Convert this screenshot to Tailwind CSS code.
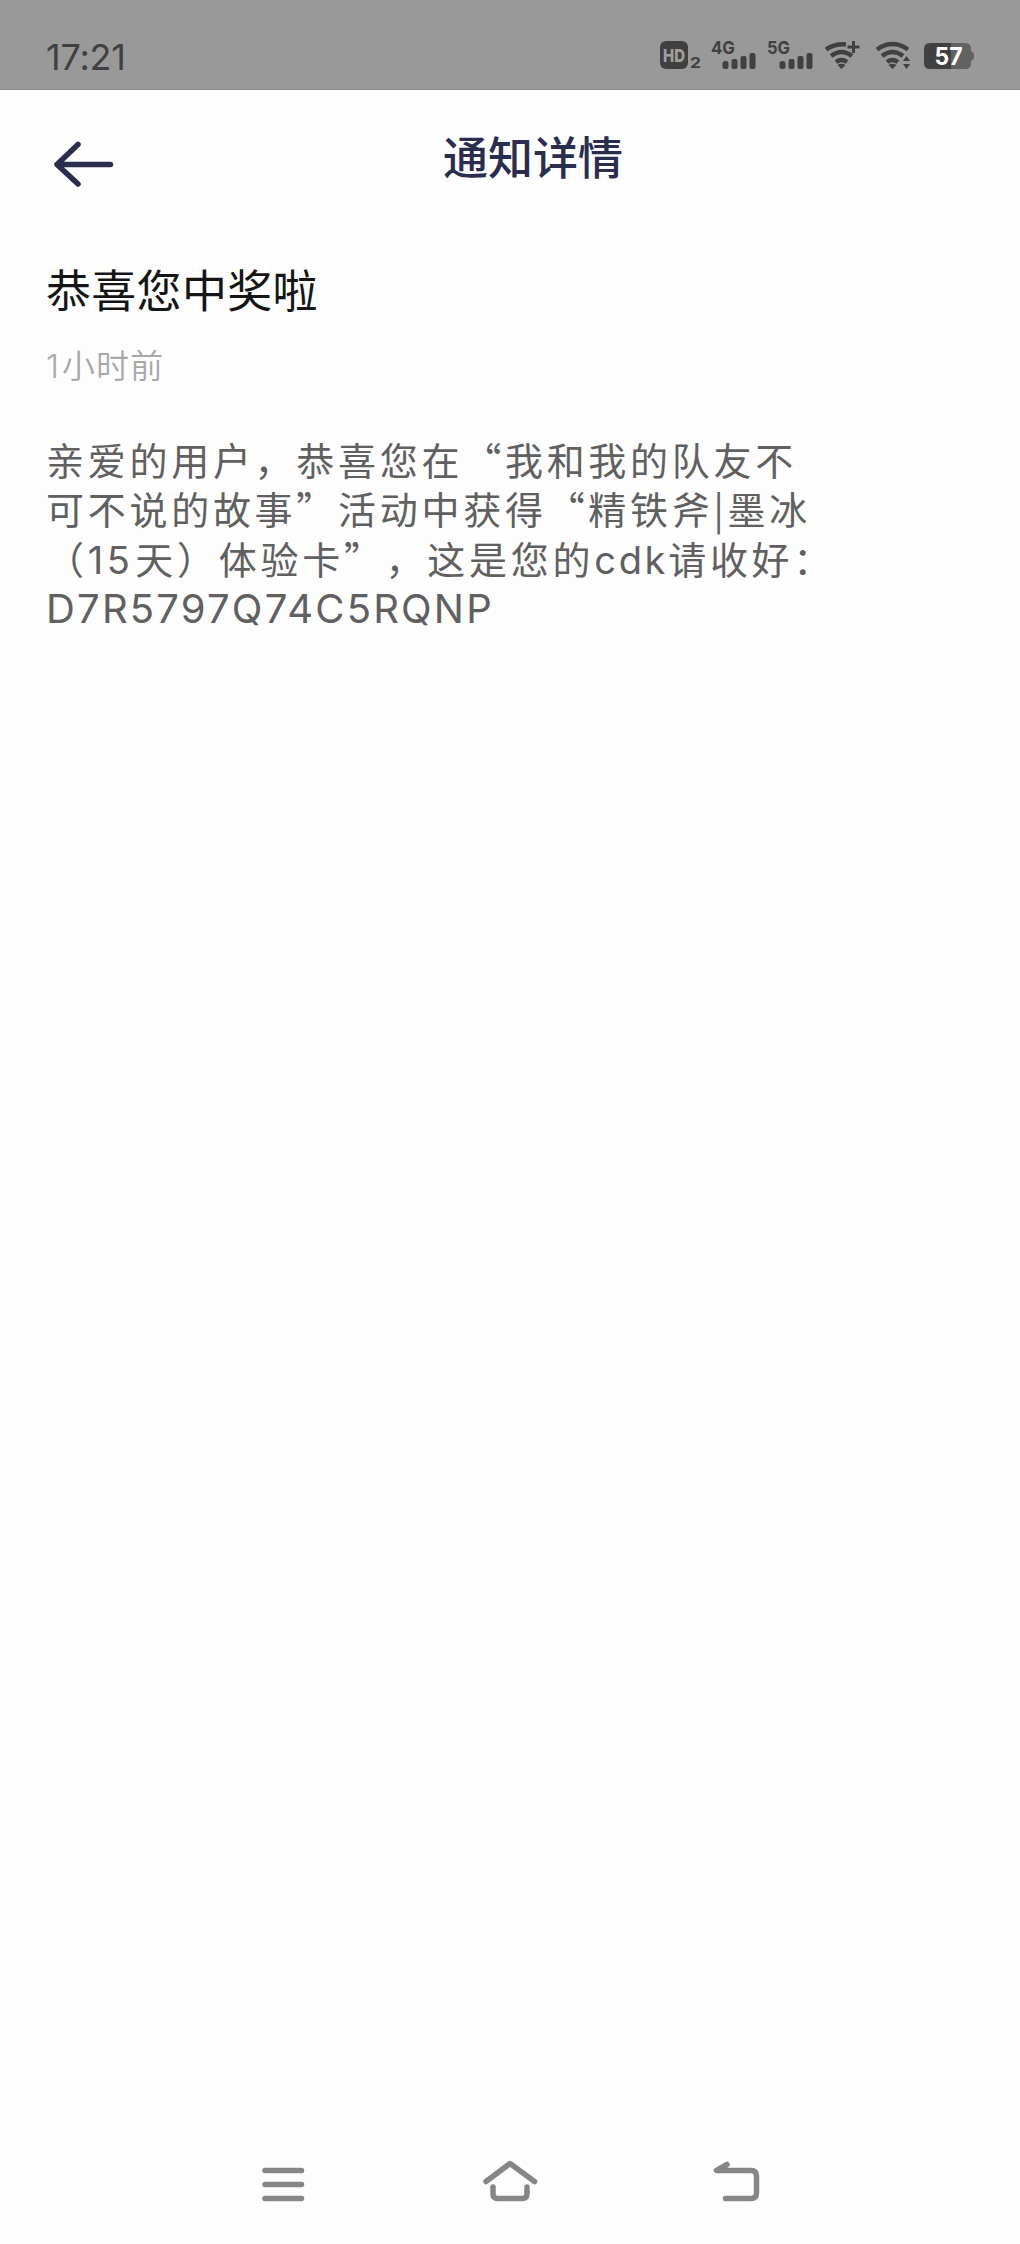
<!DOCTYPE html>
<html lang="zh-CN">
<head>
<meta charset="utf-8">
<title>通知详情</title>
<script src="https://cdn.jsdelivr.net/npm/@tailwindcss/browser@4"></script>
</head>
<body class="bg-[#fdfdfd] font-['Noto_Sans_CJK_SC',sans-serif]">
<div class="flex h-[2244px] w-[1020px] flex-col overflow-hidden">
  <header class="flex h-[90px] shrink-0 items-start justify-between border-b border-[#858585] bg-[#999] pl-[46px] pr-[44px] text-[#404040]">
    <time class="mt-[34px] font-['Inter',sans-serif] text-[36px] leading-[46px] tracking-[-0.2px]">17:21</time>
    <svg class="mt-5 h-[70px] w-[320px]" viewBox="656 20 320 70" fill="#404040">
      <rect x="660" y="41" width="28" height="28" rx="6"/>
      <text x="663" y="61.500" font-family="Inter" font-weight="800" font-size="18" textLength="22" lengthAdjust="spacingAndGlyphs" fill="#a0a0a0">HD</text>
      <text x="690" y="68" font-family="Inter" font-weight="700" font-size="15" textLength="11" lengthAdjust="spacingAndGlyphs">2</text>
      <text x="711" y="54" font-family="Inter" font-weight="700" font-size="18" textLength="24" lengthAdjust="spacingAndGlyphs">4G</text>
      <g id="bars"><rect x="722.5" y="61" width="6" height="8" rx="2.5"/><rect x="731.5" y="59" width="6" height="10" rx="2"/><rect x="740.5" y="56" width="6" height="13" rx="2"/><rect x="749.500" y="53" width="6" height="16" rx="2"/></g>
      <text x="767" y="54" font-family="Inter" font-weight="700" font-size="18" textLength="23" lengthAdjust="spacingAndGlyphs">5G</text>
      <use href="#bars" x="57"/>
      <g fill="none" stroke="#404040" stroke-width="4.500">
        <path d="M826 49.500Q835 43.500 846 44.500M831 56Q841.500 48 852 56M836 62Q841.500 58 847 62"/>
        <path d="M853.500 41V53M847.500 47H859.500" stroke-width="3"/>
        <path d="M877 49.500Q892.500 38.500 908 49.500M882 56Q892.500 48 903 56M887 62Q892.500 58 898 62"/>
      </g>
      <path d="M837.500 65Q841.500 62.500 845.500 65L841.500 69ZM888.500 65Q892.500 62.500 896.500 65L892.500 69ZM906.500 56L910 61H903ZM903 64H910L906.500 69Z"/>
      <path d="M930 43H951V69H930Q924 69 924 63V49Q924 43 930 43Z"/>
      <path d="M951 43H965Q971 43 971 49V51Q974 52 974 56T971 61V63Q971 69 965 69H951Z" fill="#626262"/>
      <text x="948.500" y="65" text-anchor="middle" font-family="Inter" font-weight="700" font-size="24" textLength="28" lengthAdjust="spacingAndGlyphs" fill="#fff">57</text>
    </svg>
  </header>
  <nav class="grid h-[150px] shrink-0 grid-cols-[90px_1fr_90px] pl-[46px] text-[#2b2d4f]">
    <svg class="mt-[46px] h-[56px] w-[76px]" viewBox="46 136 76 56" fill="none" stroke="currentColor" stroke-width="5.500" stroke-linecap="round" stroke-linejoin="round"><path d="M78 144.500L57 164.500L78 184M58 164.500H110.500"/></svg>
    <h1 class="mt-[33px] text-center text-[45px] font-medium leading-[66px]">通知详情</h1>
  </nav>
  <main class="flex grow flex-col pl-[46px]">
    <h2 class="mt-[16px] text-[45px] leading-[66px] tracking-[0.3px] text-[#151515]">恭喜您中奖啦</h2>
    <p class="mt-[18px] text-[33px] font-[350] leading-[48px] tracking-[1px] text-[#a8a8a8]"><span class="mr-[2px] font-['Inter',sans-serif]">1</span>小时前</p>
    <div class="mt-[44px] whitespace-nowrap text-[38px] leading-[49.300px] tracking-[3.720px] text-[#606060] [text-spacing-trim:space-all]">
      <p class="h-[49.300px]">亲爱的用户，恭喜您在“我和我的队友不</p>
      <p class="h-[49.300px]">可不说的故事”活动中获得“精铁斧|墨冰</p>
      <p class="h-[49.300px]">（<span class="mr-[2px] font-['Inter',sans-serif] tracking-[3.500px]">15</span>天）体验卡”，这是您的<span class="font-['Inter',sans-serif] tracking-[2.700px]">cdk</span>请收好：</p>
      <p class="mt-[2px] h-[49.300px] font-['Inter',sans-serif] text-[40px] tracking-[2.200px]">D7R5797Q74C5RQNP</p>
    </div>
  </main>
  <footer class="h-[124px] shrink-0">
    <svg class="h-[124px] w-[1020px]" viewBox="0 2120 1020 124" fill="none" stroke="#868686" stroke-width="5.500" stroke-linecap="round" stroke-linejoin="round">
      <path d="M265 2170.500H301.500M265 2184.500H301.500M265 2198.500H301.500"/>
      <path d="M486 2181.500L510 2163.500L534.500 2181.500M493 2187V2194Q493 2198.500 497.500 2198.500H522.500Q527 2198.500 527 2194V2187"/>
      <path d="M727 2164.500L716.500 2170.500H751Q756.500 2170.500 756.500 2176V2193Q756.500 2198.500 751 2198.500H725.500"/>
    </svg>
  </footer>
</div>
</body>
</html>
